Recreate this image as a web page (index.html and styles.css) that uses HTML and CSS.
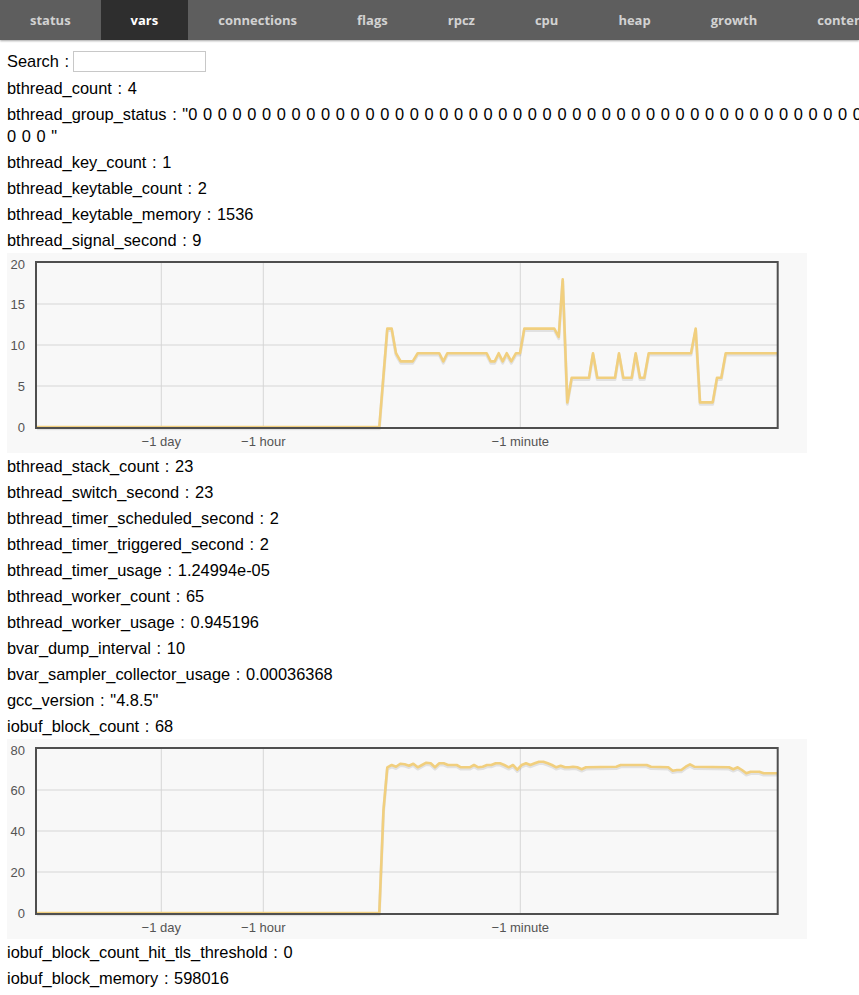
FILE: index.html
```html
<!DOCTYPE html>
<html>
<head>
<meta charset="utf-8">
<title>vars</title>
<link rel="stylesheet" href="styles.css">
</head>
<body>
<nav class="tabs">
  <a class="tab">status</a>
  <a class="tab active">vars</a>
  <a class="tab">connections</a>
  <a class="tab">flags</a>
  <a class="tab">rpcz</a>
  <a class="tab">cpu</a>
  <a class="tab">heap</a>
  <a class="tab">growth</a>
  <a class="tab">contention</a>
  <a class="tab">hotspots</a>
</nav>
<main class="vars">
  <div class="search"><span class="search-label">Search :</span><input class="search-box" type="text"></div>
  <p class="var">bthread_count : 4</p>
  <p class="var">bthread_group_status : "0 0 0 0 0 0 0 0 0 0 0 0 0 0 0 0 0 0 0 0 0 0 0 0 0 0 0 0 0 0 0 0 0 0 0 0 0 0 0 0 0 0 0 0 0 0 0 0 0 0 "</p>
  <p class="var">bthread_key_count : 1</p>
  <p class="var">bthread_keytable_count : 2</p>
  <p class="var">bthread_keytable_memory : 1536</p>
  <p class="var">bthread_signal_second : 9</p>
  <div class="chart">
    <svg width="800" height="200" viewBox="0 0 800 200">
      <g class="grid">
        <line x1="30" y1="51" x2="770" y2="51"/>
        <line x1="30" y1="92" x2="770" y2="92"/>
        <line x1="30" y1="133" x2="770" y2="133"/>
        <line x1="154.3" y1="10" x2="154.3" y2="174"/>
        <line x1="256.3" y1="10" x2="256.3" y2="174"/>
        <line x1="513.3" y1="10" x2="513.3" y2="174"/>
      </g>
      <g class="ticks">
        <text class="ylab" x="18" y="16">20</text>
        <text class="ylab" x="18" y="55.6">15</text>
        <text class="ylab" x="18" y="96.6">10</text>
        <text class="ylab" x="18" y="137.6">5</text>
        <text class="ylab" x="18" y="178.6">0</text>
        <text class="xlab" x="154.3" y="193">−1 day</text>
        <text class="xlab" x="256.3" y="193">−1 hour</text>
        <text class="xlab" x="513.3" y="193">−1 minute</text>
      </g>
      <polyline class="shadow" points="30,174 372.3,174 380.3,75.6 384.7,75.6 389,100.2 393.7,108.4 405.7,108.4 410.7,100.2 432.3,100.2 436.3,108.4 440.3,100.2 479.7,100.2 483.7,108.4 487.7,108.4 491.7,100.2 495.7,108.4 499.7,100.2 504.3,108.4 509,100.2 513,100.2 517.3,75.6 547.3,75.6 551.7,83.8 555.7,26.4 560.3,149.4 564.7,124.8 582,124.8 586,100.2 590.3,124.8 608,124.8 612,100.2 616.3,124.8 624.7,124.8 628.7,100.2 633,124.8 637.3,124.8 641.7,100.2 684,100.2 688.7,75.6 693,149.4 705.7,149.4 710,124.8 714.3,124.8 718.7,100.2 770,100.2"/>
      <polyline class="series" points="30,174 372.3,174 380.3,75.6 384.7,75.6 389,100.2 393.7,108.4 405.7,108.4 410.7,100.2 432.3,100.2 436.3,108.4 440.3,100.2 479.7,100.2 483.7,108.4 487.7,108.4 491.7,100.2 495.7,108.4 499.7,100.2 504.3,108.4 509,100.2 513,100.2 517.3,75.6 547.3,75.6 551.7,83.8 555.7,26.4 560.3,149.4 564.7,124.8 582,124.8 586,100.2 590.3,124.8 608,124.8 612,100.2 616.3,124.8 624.7,124.8 628.7,100.2 633,124.8 637.3,124.8 641.7,100.2 684,100.2 688.7,75.6 693,149.4 705.7,149.4 710,124.8 714.3,124.8 718.7,100.2 770,100.2"/>
      <rect class="frame" x="29" y="9" width="741.7" height="166"/>
    </svg>
  </div>
  <p class="var">bthread_stack_count : 23</p>
  <p class="var">bthread_switch_second : 23</p>
  <p class="var">bthread_timer_scheduled_second : 2</p>
  <p class="var">bthread_timer_triggered_second : 2</p>
  <p class="var">bthread_timer_usage : 1.24994e-05</p>
  <p class="var">bthread_worker_count : 65</p>
  <p class="var">bthread_worker_usage : 0.945196</p>
  <p class="var">bvar_dump_interval : 10</p>
  <p class="var">bvar_sampler_collector_usage : 0.00036368</p>
  <p class="var">gcc_version : "4.8.5"</p>
  <p class="var">iobuf_block_count : 68</p>
  <div class="chart">
    <svg width="800" height="200" viewBox="0 0 800 200">
      <g class="grid">
        <line x1="30" y1="51" x2="770" y2="51"/>
        <line x1="30" y1="92" x2="770" y2="92"/>
        <line x1="30" y1="133" x2="770" y2="133"/>
        <line x1="154.3" y1="10" x2="154.3" y2="174"/>
        <line x1="256.3" y1="10" x2="256.3" y2="174"/>
        <line x1="513.3" y1="10" x2="513.3" y2="174"/>
      </g>
      <g class="ticks">
        <text class="ylab" x="18" y="16">80</text>
        <text class="ylab" x="18" y="55.6">60</text>
        <text class="ylab" x="18" y="96.6">40</text>
        <text class="ylab" x="18" y="137.6">20</text>
        <text class="ylab" x="18" y="178.6">0</text>
        <text class="xlab" x="154.3" y="193">−1 day</text>
        <text class="xlab" x="256.3" y="193">−1 hour</text>
        <text class="xlab" x="513.3" y="193">−1 minute</text>
      </g>
      <polyline class="shadow" points="30,174 372.3,174 376.5,71 380.3,28.3 384.7,26 389,27.7 393.3,24.7 397.7,25.3 402,26.7 406.3,24.7 410.7,28.3 415,26 419.3,23.7 423.7,24.3 428,28.3 432.3,24.3 436.7,24.3 441,26 445.3,26 449.7,26 454,28.3 458.3,28.3 462.7,28.3 467,26 471.3,28.3 475.7,27.7 480,26 484.3,26 488.7,24.3 493,24.3 497.3,26 501.7,28.3 506,26 510.3,30.7 514.7,26 519,24.3 523.3,26 527.7,24.3 532,22.7 536.3,22.7 540.7,24.3 545,26 549.3,28.3 553.7,26.7 558,28.3 562.3,28.3 566,27.7 570.3,28.3 574.7,30.3 579,28.3 609.3,27.7 613.7,26 639.7,26 644,27.7 661.3,28.3 665.7,31.7 670,31 674.3,31 678.7,27.7 683,25.3 687.3,27.7 722,28.3 726.3,30.3 730.7,28.3 735,31 739.3,34.3 743.7,32.7 752.3,32.7 756.7,34.3 770,34.3"/>
      <polyline class="series" points="30,174 372.3,174 376.5,71 380.3,28.3 384.7,26 389,27.7 393.3,24.7 397.7,25.3 402,26.7 406.3,24.7 410.7,28.3 415,26 419.3,23.7 423.7,24.3 428,28.3 432.3,24.3 436.7,24.3 441,26 445.3,26 449.7,26 454,28.3 458.3,28.3 462.7,28.3 467,26 471.3,28.3 475.7,27.7 480,26 484.3,26 488.7,24.3 493,24.3 497.3,26 501.7,28.3 506,26 510.3,30.7 514.7,26 519,24.3 523.3,26 527.7,24.3 532,22.7 536.3,22.7 540.7,24.3 545,26 549.3,28.3 553.7,26.7 558,28.3 562.3,28.3 566,27.7 570.3,28.3 574.7,30.3 579,28.3 609.3,27.7 613.7,26 639.7,26 644,27.7 661.3,28.3 665.7,31.7 670,31 674.3,31 678.7,27.7 683,25.3 687.3,27.7 722,28.3 726.3,30.3 730.7,28.3 735,31 739.3,34.3 743.7,32.7 752.3,32.7 756.7,34.3 770,34.3"/>
      <rect class="frame" x="29" y="9" width="741.7" height="166"/>
    </svg>
  </div>
  <p class="var">iobuf_block_count_hit_tls_threshold : 0</p>
  <p class="var">iobuf_block_memory : 598016</p>
</main>
</body>
</html>
```
FILE: styles.css
```css
html, body {
  margin: 0;
  padding: 0;
  background: #fff;
}
body {
  overflow-x: hidden;
  font-family: "Liberation Sans", Arial, Helvetica, sans-serif;
  color: #000;
}
.tabs {
  display: flex;
  height: 40px;
  background: #5e5e5e;
  box-shadow: 0 1px 2px rgba(0, 0, 0, 0.35);
  overflow: hidden;
  white-space: nowrap;
  position: relative;
}
.tab {
  flex: 0 0 auto;
  display: flex;
  align-items: center;
  padding: 0 30px;
  font-family: "Open Sans", "DejaVu Sans", sans-serif;
  font-weight: 700;
  font-size: 13px;
  color: #d2d2d2;
  text-decoration: none;
}
.tab.active {
  background: #2e2e2e;
  color: #ffffff;
}
.vars {
  width: 870px;
  padding: 8px 0 0 7px;
  font-size: 16.4px;
  word-spacing: 1.1px;
}
.search {
  display: flex;
  align-items: center;
  height: 27px;
}
.search-label {
  margin-right: 4px;
}
.search-box {
  box-sizing: border-box;
  width: 133px;
  height: 21px;
  margin: 0;
  border: 1px solid #c8c8c8;
  padding: 0 3px;
  background: #fff;
}
.var {
  margin: 0;
  padding: 2px 0;
  line-height: 22px;
}
.chart {
  width: 800px;
  height: 200px;
  background: #f8f8f8;
}
.chart svg {
  display: block;
}
.grid line {
  stroke: #d6d6d6;
  stroke-width: 1;
}
.ticks text {
  font-family: "Liberation Sans", Arial, sans-serif;
  font-size: 13px;
  fill: #545454;
  word-spacing: 0;
}
.ylab {
  text-anchor: end;
}
.xlab {
  text-anchor: middle;
}
.series {
  fill: none;
  stroke: #f1cf7e;
  stroke-width: 2.6;
  stroke-linejoin: round;
}
.shadow {
  fill: none;
  stroke: rgba(0, 0, 0, 0.09);
  stroke-width: 3;
  stroke-linejoin: round;
  transform: translate(0, 1.8px);
}
.frame {
  fill: none;
  stroke: #4f4f4f;
  stroke-width: 2;
}
```
